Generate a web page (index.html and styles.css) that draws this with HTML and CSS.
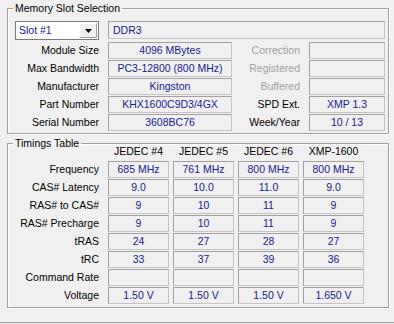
FILE: index.html
```html
<!DOCTYPE html>
<html lang="en">
<head>
  <meta charset="UTF-8">
  <title>SPD</title>
  <link rel="stylesheet" href="styles.css">
</head>
<body>
  <div class="page">

    <div class="group slot-group">
      <span class="legend">Memory Slot Selection</span>
      <div class="slot-grid">
        <div class="combo">
          <span class="combo-text">Slot #1</span>
          <span class="combo-btn">
            <svg width="7" height="4" viewBox="0 0 7 4"><polygon points="0,0 7,0 3.5,4" fill="#000"/></svg>
          </span>
        </div>
        <div class="field left wide">DDR3</div>

        <div class="label">Module Size</div>
        <div class="field">4096 MBytes</div>
        <div class="label off">Correction</div>
        <div class="field"></div>

        <div class="label">Max Bandwidth</div>
        <div class="field">PC3-12800 (800 MHz)</div>
        <div class="label off">Registered</div>
        <div class="field"></div>

        <div class="label">Manufacturer</div>
        <div class="field">Kingston</div>
        <div class="label off">Buffered</div>
        <div class="field"></div>

        <div class="label">Part Number</div>
        <div class="field">KHX1600C9D3/4GX</div>
        <div class="label">SPD Ext.</div>
        <div class="field">XMP 1.3</div>

        <div class="label">Serial Number</div>
        <div class="field">3608BC76</div>
        <div class="label">Week/Year</div>
        <div class="field">10 / 13</div>
      </div>
    </div>

    <div class="group timing-group">
      <span class="legend">Timings Table</span>
      <div class="timing-grid">
        <div></div>
        <div class="head">JEDEC #4</div>
        <div class="head">JEDEC #5</div>
        <div class="head">JEDEC #6</div>
        <div class="head">XMP-1600</div>

        <div class="label">Frequency</div>
        <div class="field">685 MHz</div>
        <div class="field">761 MHz</div>
        <div class="field">800 MHz</div>
        <div class="field">800 MHz</div>

        <div class="label">CAS# Latency</div>
        <div class="field">9.0</div>
        <div class="field">10.0</div>
        <div class="field">11.0</div>
        <div class="field">9.0</div>

        <div class="label">RAS# to CAS#</div>
        <div class="field">9</div>
        <div class="field">10</div>
        <div class="field">11</div>
        <div class="field">9</div>

        <div class="label">RAS# Precharge</div>
        <div class="field">9</div>
        <div class="field">10</div>
        <div class="field">11</div>
        <div class="field">9</div>

        <div class="label">tRAS</div>
        <div class="field">24</div>
        <div class="field">27</div>
        <div class="field">28</div>
        <div class="field">27</div>

        <div class="label">tRC</div>
        <div class="field">33</div>
        <div class="field">37</div>
        <div class="field">39</div>
        <div class="field">36</div>

        <div class="label">Command Rate</div>
        <div class="field"></div>
        <div class="field"></div>
        <div class="field"></div>
        <div class="field"></div>

        <div class="label">Voltage</div>
        <div class="field">1.50 V</div>
        <div class="field">1.50 V</div>
        <div class="field">1.50 V</div>
        <div class="field">1.650 V</div>
      </div>
    </div>

  </div>
</body>
</html>
```

FILE: styles.css
```css
body {
  margin: 0;
  padding: 0;
  background: #f0f0f0;
  color: #000;
  font-family: "Liberation Sans", Arial, sans-serif;
  font-size: 10.5px;
  width: 394px;
  height: 324px;
  overflow: hidden;
}

.page {
  box-sizing: border-box;
  height: 323px;
  padding-top: 8px;
  border-bottom: 1px solid #a0a0a0;
}

.group {
  position: relative;
  box-sizing: border-box;
  margin-left: 7px;
  width: 382px;
  border: 1px solid #a0a0a0;
  box-shadow: 1px 1px 0 #fff, inset 1px 1px 0 #fff;
  padding-left: 7px;
}

.legend {
  position: absolute;
  top: -7px;
  left: 5px;
  padding: 0 2px;
  line-height: 12px;
  background: #f0f0f0;
}

.slot-group {
  height: 126px;
  padding-top: 12px;
}

.timing-group {
  margin-top: 9px;
  height: 165px;
  padding-top: 0;
}

.slot-grid {
  display: grid;
  grid-template-columns: 84px 124px 59px 76px;
  grid-template-rows: 20px repeat(5, 17px);
  column-gap: 9px;
  row-gap: 1px;
}

.timing-grid {
  display: grid;
  grid-template-columns: 89px repeat(4, 61px);
  grid-template-rows: 16px repeat(8, 17px);
  column-gap: 4px;
  row-gap: 1px;
}

.timing-grid .label {
  padding-right: 5px;
}

.label {
  text-align: right;
  line-height: 17px;
  white-space: nowrap;
}

.label.off {
  color: #a0a0a0;
}

.head {
  text-align: center;
  line-height: 15px;
}

.field {
  box-sizing: border-box;
  height: 17px;
  border: 1px solid #a0a0a0;
  border-right-color: #c4c4c4;
  border-bottom-color: #c4c4c4;
  color: #1a1a8c;
  text-align: center;
  line-height: 15px;
  white-space: nowrap;
  overflow: hidden;
}

.field.left {
  text-align: left;
  padding-left: 4px;
}

.field.wide {
  grid-column: 2 / 5;
  height: 18px;
  line-height: 16px;
}

.combo {
  box-sizing: border-box;
  height: 19px;
  border: 1px solid #7a7a7a;
  background: #fff;
  display: flex;
  align-items: center;
  justify-content: space-between;
  padding: 0 1px 0 3px;
}

.combo-text {
  color: #1a1a8c;
  line-height: 15px;
}

.combo-btn {
  box-sizing: border-box;
  width: 18px;
  height: 15px;
  background: #f0f0f0;
  border: 1px solid;
  border-color: #fff #a0a0a0 #a0a0a0 #fff;
  display: flex;
  align-items: center;
  justify-content: center;
}

.combo-btn svg {
  display: block;
}
```
